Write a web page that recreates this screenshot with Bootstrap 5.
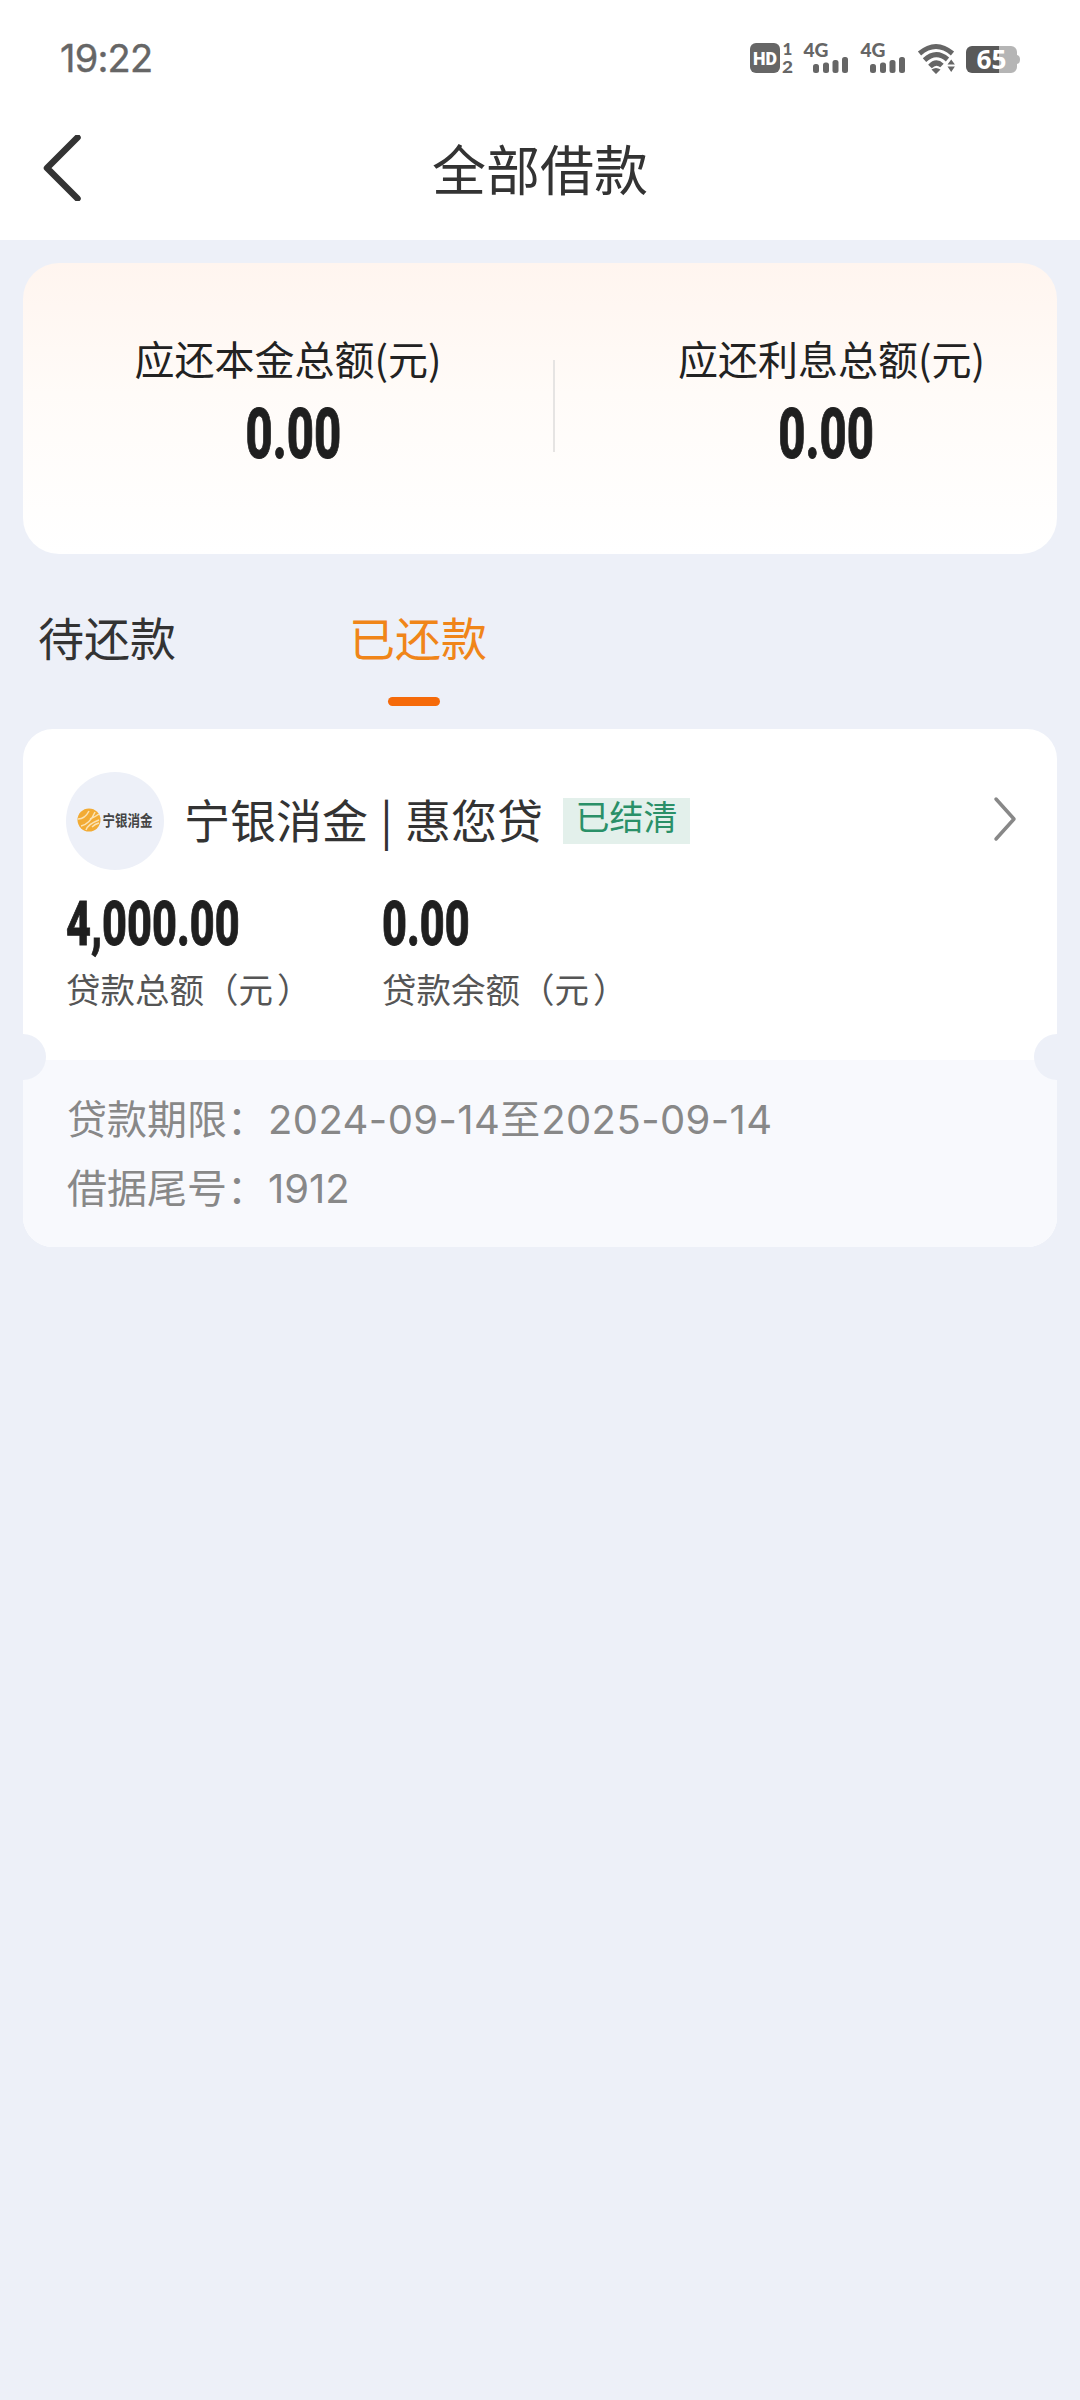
<!DOCTYPE html>
<html lang="zh-CN">
<head>
<meta charset="utf-8">
<meta name="viewport" content="width=device-width, initial-scale=1">
<title>全部借款</title>
<link rel="stylesheet" href="https://cdn.jsdelivr.net/npm/bootstrap@5.3.0/dist/css/bootstrap.min.css">
<style>
body{background:#edf0f8;color:#333;font-family:"Noto Sans CJK SC",sans-serif;min-height:2400px;font-weight:400}
.statusbar{height:104px;padding:12px 58px 0 60px;color:#666}
.clock{font:400 38px/50px Inter,sans-serif;letter-spacing:-.8px;-webkit-text-stroke:.4px #666}
.topbar{height:136px;padding-left:43px}
.topbar h1{font-size:54px;line-height:64px;font-weight:400;margin:0;color:#333;padding-bottom:9px}
.back-ic{width:38px;height:66px;margin-bottom:8px}
.summary{margin:23px 23px 0;height:291px;border:0;border-radius:36px;background:linear-gradient(#fff5ef,#fffbf8 45%,#fff);padding-top:67px;color:#222}
.lbl{font-size:40px;line-height:56px}
.num{font-family:Roboto,sans-serif;font-weight:800;color:#1f1f1f;display:block;transform:scaleX(.665);white-space:nowrap;-webkit-text-stroke:1px #1f1f1f}
.num-lg{font-size:71px;line-height:76px;margin-top:10px}
.num-md{font-size:62px;line-height:66px;transform:scaleX(.698);transform-origin:0 50%}
.vline{width:2px;height:92px;background:#e6e4e3;margin-top:30px}
.tabs{height:175px;padding:54px 0 0 38px}
.tab-i{font-size:46px;line-height:56px;color:#333}
.tab-i.active{color:#f08519}
.bar-i{width:52px;height:9px;border-radius:5px;background:#f56a0a;margin-top:33px}
.loan{margin:0 23px;border:0;border-radius:30px;overflow:hidden;height:518px;background:#fff}
.loan-top{height:331px;padding:43px 40px 0 43px}
.loan-bot{height:187px;background:#f8f9fd;padding:24px 44px 0;color:#888;font-size:40px;line-height:67px}
.loan-bot .d{font-family:Inter,sans-serif;font-size:40px;margin-left:1px}
.d-date{letter-spacing:.4px}
.logo{width:98px;height:98px;border-radius:50%;background:#edf0f8;padding-bottom:3px}
.logo-t{font-size:12.5px;font-weight:700;line-height:20px;color:#444;transform:scaleY(1.2);margin-left:1px}
.name{font-size:46px;line-height:60px;margin:-6px 0 0 20px;white-space:pre;word-spacing:2px}
.done{background:#e3f0eb;color:#2a9068;font-size:34px;line-height:36px;height:46px;width:127px;margin-left:20px}
.nums{padding-top:21px}
.cap{font-size:34.5px;line-height:48px;color:#555;margin-top:7px}
.cap i{font-style:normal;margin-left:4px}
.notch{width:46px;height:46px;border-radius:50%;background:#edf0f8;top:305px}
.notch-l{left:-23px}.notch-r{right:-23px}
</style>
<script src="https://cdn.jsdelivr.net/npm/bootstrap@5.3.0/dist/js/bootstrap.bundle.min.js"></script>
</head>
<body>
<header class="bg-white">
  <div class="statusbar d-flex justify-content-between align-items-center">
    <span class="clock">19:22</span>
    <svg width="272" height="50" viewBox="750 33 272 50" fill="#666" font-family="Lato,sans-serif" font-weight="900">
      <rect x="750" y="43" width="30" height="30" rx="6"/>
      <text x="753" y="65" font-size="19" font-family="Roboto" fill="#fff" textLength="24" lengthAdjust="spacingAndGlyphs">HD</text>
      <text x="782.500" y="55" font-size="17">1</text>
      <text x="782" y="72.500" font-size="17" textLength="11" lengthAdjust="spacingAndGlyphs">2</text>
      <g id="sig">
        <text x="803.500" y="57" font-size="19.500" textLength="25" lengthAdjust="spacingAndGlyphs">4G</text>
        <rect x="813" y="64" width="6" height="9" rx="2.500"/><rect x="823" y="62.500" width="6" height="10.500" rx="2.500"/><rect x="832.500" y="60" width="6" height="13" rx="2.500"/><rect x="842" y="57" width="6" height="16" rx="2.500"/>
      </g>
      <use href="#sig" x="57"/>
      <g fill="none" stroke="#666" stroke-width="5">
        <path d="M919.500 53.500Q936 39.500 952.500 53.500"/>
        <path d="M924.500 60.200Q936 49.500 947.500 59.500"/>
        <path d="M930 66.500Q936 60 942 65.500"/>
      </g>
      <path d="M931.500 69.500Q936 66.500 940.500 69.500L936 74zM947.500 64.500l3.700-5 3.700 5zM947.500 66.500h7.400l-3.700 5.500z"/>
      <path d="M972 46h27v27h-27a6 6 0 0 1-6-6V52a6 6 0 0 1 6-6z" fill="#595959"/>
      <path d="M999 46h12a6 6 0 0 1 6 6v3q3 .5 3 4.500t-3 4.500v3a6 6 0 0 1-6 6h-12z" fill="#b5b5b5"/>
      <text x="976.500" y="69" font-size="26" font-family="Open Sans" font-weight="700" fill="#fff" textLength="30" lengthAdjust="spacingAndGlyphs">65</text>
    </svg>
  </div>
  <div class="topbar d-flex align-items-center position-relative">
    <svg class="back-ic" viewBox="0 0 38 66" fill="none" stroke="#333" stroke-width="6.500" stroke-linecap="round" stroke-linejoin="round"><path d="M34.500 2.500L4 33l30.500 30.500"/></svg>
    <h1 class="position-absolute start-50 translate-middle-x">全部借款</h1>
  </div>
</header>

<main>
  <section class="summary card flex-row">
    <div class="text-center" style="width:530px"><div class="lbl">应还本金总额(元)</div><span class="num num-lg ps-3">0.00</span></div>
    <div class="vline"></div>
    <div class="flex-fill text-center" style="padding-left:51px"><div class="lbl">应还利息总额(元)</div><span class="num num-lg pe-3">0.00</span></div>
  </section>

  <nav class="tabs d-flex">
    <div class="tab-i">待还款</div>
    <div class="tab-i active d-flex flex-column align-items-center" style="margin-left:173px">已还款<span class="bar-i me-2 align-self-center"></span></div>
  </nav>

  <article class="loan card position-relative">
    <div class="loan-top">
      <div class="d-flex align-items-center">
        <div class="logo d-flex align-items-center justify-content-center">
          <svg width="24" height="24" viewBox="0 0 24 24"><circle cx="12" cy="12" r="11.500" fill="#f2ab34"/><path d="M1 11Q8 11 12 3M4 18Q13 16 18 4M9 22Q11 16 22 12M13 11q5-2 9-5M15 19q3-3 7-4" fill="none" stroke="#fbe3b4" stroke-width="1.500"/></svg><span class="logo-t">宁银消金</span>
        </div>
        <div class="name">宁银消金 | 惠您贷</div>
        <div class="done text-center">已结清</div>
        <svg class="ms-auto mb-1" width="24" height="48" viewBox="0 0 24 48" fill="none" stroke="#888" stroke-width="3.500" stroke-linecap="round" stroke-linejoin="round"><path d="M3 4l18 20L3 44"/></svg>
      </div>
      <div class="d-flex nums">
        <div style="width:316px"><span class="num num-md">4,000.00</span><div class="cap">贷款总额（元<i>）</i></div></div>
        <div><span class="num num-md">0.00</span><div class="cap">贷款余额（元<i>）</i></div></div>
      </div>
    </div>
    <div class="loan-bot">
      <div>贷款期限：<span class="d d-date">2024-09-14</span>至<span class="d d-date">2025-09-14</span></div>
      <div>借据尾号：<span class="d">1912</span></div>
    </div>
    <i class="notch notch-l position-absolute"></i><i class="notch notch-r position-absolute"></i>
  </article>
</main>
</body>
</html>
